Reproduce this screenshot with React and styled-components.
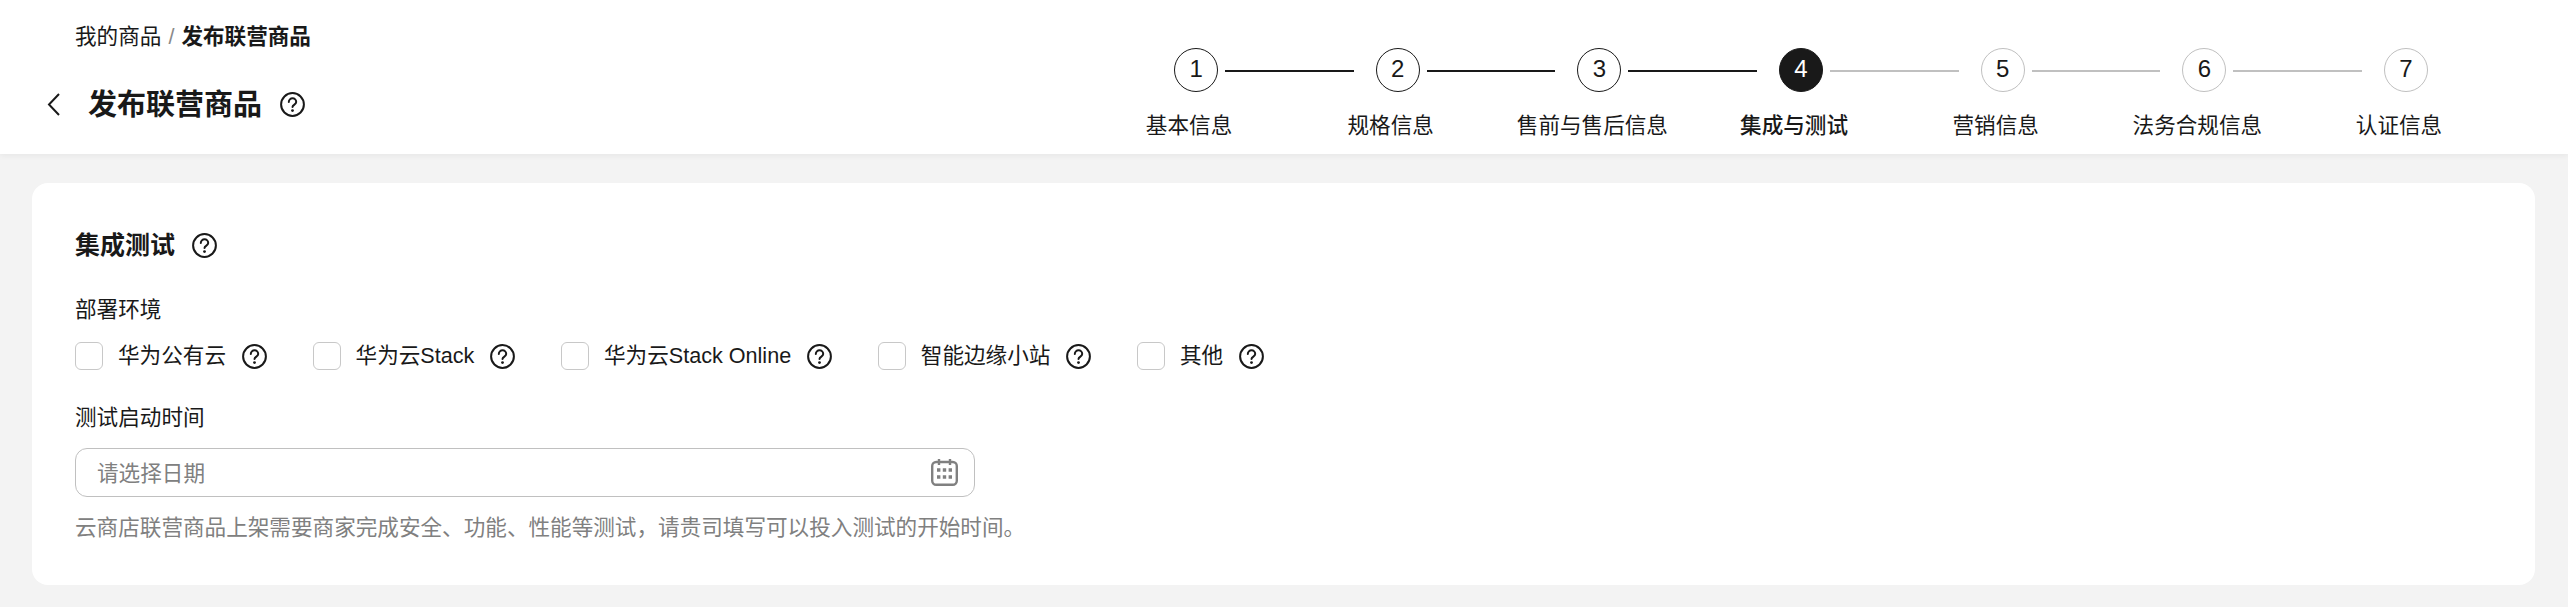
import React from 'react'
import styled, { createGlobalStyle } from 'styled-components'

const STEPS = ['基本信息', '规格信息', '售前与售后信息', '集成与测试', '营销信息', '法务合规信息', '认证信息']
const CURRENT = 3

const ENVIRONMENTS = ['华为公有云', '华为云Stack', '华为云Stack Online', '智能边缘小站', '其他']

function HelpIcon () {
  return (
    <HelpSvg width="25" height="25" viewBox="0 0 25 25" fill="none" stroke="#191919" strokeWidth="2">
      <circle cx="12.5" cy="12.5" r="11.4" />
      <path d="M8.8 10a3.7 3.7 0 0 1 7.4.1c0 2.5-3.7 2.4-3.7 5" strokeLinecap="round" />
      <circle cx="12.5" cy="18.6" r="1.4" fill="#191919" stroke="none" />
    </HelpSvg>
  )
}

function CalendarIcon () {
  return (
    <svg width="27" height="27" viewBox="0 0 27 27" fill="none" stroke="#808080" strokeWidth="2.4">
      <rect x="1.2" y="3" width="24.6" height="22.8" rx="4" />
      <path d="M8 0v6M19 0v6" />
      <path d="M6 11h3.4M11.8 11h3.4M17.6 11h3.4M6 18h3.4M11.8 18h3.4M17.6 18h3.4" strokeWidth="3.4" />
    </svg>
  )
}

export default function App () {
  return (
    <>
      <GlobalStyle />
      <Header>
        <TitleBlock>
          <Breadcrumb>
            我的商品<Slash>/</Slash><strong>发布联营商品</strong>
          </Breadcrumb>
          <TitleRow>
            <svg width="13" height="23" viewBox="0 0 13 23" fill="none" stroke="#191919" strokeWidth="2">
              <path d="M12 1 2 11.5 12 22" />
            </svg>
            <PageTitle>发布联营商品</PageTitle>
            <HelpIcon />
          </TitleRow>
        </TitleBlock>
        <Steps>
          {STEPS.map((label, i) => (
            <Step key={label} $last={i === STEPS.length - 1}>
              <StepHead>
                <Circle $active={i === CURRENT} $done={i <= CURRENT}>{i + 1}</Circle>
                {i < STEPS.length - 1 && <Line $done={i < CURRENT} />}
              </StepHead>
              <StepLabel $active={i === CURRENT}>{label}</StepLabel>
            </Step>
          ))}
        </Steps>
      </Header>
      <Main>
        <Card>
          <SectionTitle>集成测试<HelpIcon /></SectionTitle>
          <FieldLabel>部署环境</FieldLabel>
          <CheckRow>
            {ENVIRONMENTS.map((name) => (
              <CheckItem key={name}>
                <Box />
                <span>{name}</span>
                <HelpIcon />
              </CheckItem>
            ))}
          </CheckRow>
          <FieldLabel $gap="33px">测试启动时间</FieldLabel>
          <DateInput>
            <Placeholder>请选择日期</Placeholder>
            <CalendarIcon />
          </DateInput>
          <Hint>云商店联营商品上架需要商家完成安全、功能、性能等测试，请贵司填写可以投入测试的开始时间。</Hint>
        </Card>
      </Main>
    </>
  )
}

const GlobalStyle = createGlobalStyle`
  body {
    margin: 0;
    background: #f3f3f3;
    color: #191919;
    font-family: 'Liberation Sans', 'Noto Sans CJK SC', sans-serif;
    font-size: 21.6px;
    line-height: 30px;
  }
`

const Header = styled.header`
  display: flex;
  justify-content: space-between;
  height: 154px;
  padding-right: 140px;
  background: #fff;
  box-shadow: 0 2px 6px rgba(0, 0, 0, 0.05);
`

const TitleBlock = styled.div`
  padding: 22px 0 0 47px;
`

const Breadcrumb = styled.div`
  margin-left: 28px;

  strong {
    font-weight: 700;
  }
`

const Slash = styled.span`
  margin: 0 7px;
  color: #8a8a8a;
`

const TitleRow = styled.div`
  display: flex;
  align-items: center;
  margin-top: 30px;
`

const PageTitle = styled.h1`
  margin: 2px 18px 0 28px;
  font-size: 29px;
  line-height: 42px;
  font-weight: 700;
`

const HelpSvg = styled.svg`
  flex: none;
`

const Steps = styled.ol`
  display: flex;
  margin: 0;
  padding: 48px 0 0;
  list-style: none;
`

const Step = styled.li`
  width: ${(p) => (p.$last ? '44px' : '201.67px')};
`

const StepHead = styled.div`
  display: flex;
  align-items: center;
  height: 44px;
`

const Circle = styled.span`
  flex: none;
  display: flex;
  align-items: center;
  justify-content: center;
  box-sizing: border-box;
  width: 44px;
  height: 44px;
  border-radius: 50%;
  border: 1px solid ${(p) => (p.$done ? '#191919' : '#c0c0c0')};
  background: ${(p) => (p.$active ? '#191919' : '#fff')};
  color: ${(p) => (p.$active ? '#fff' : '#191919')};
  font-size: 24px;
  padding-bottom: 3px;
`

const Line = styled.span`
  flex: 1;
  height: 2px;
  margin: 2px 22px 0 7px;
  background: ${(p) => (p.$done ? '#191919' : '#c0c0c0')};
`

const StepLabel = styled.div`
  width: 200px;
  margin: 19px 0 0 -85px;
  text-align: center;
  white-space: nowrap;
  font-weight: ${(p) => (p.$active ? 500 : 400)};
`

const Main = styled.main`
  padding: 29px 33px 22px 32px;
`

const Card = styled.section`
  padding: 44px 43px 42px;
  background: #fff;
  border-radius: 16px;
`

const SectionTitle = styled.h2`
  display: flex;
  align-items: center;
  gap: 17px;
  margin: 0;
  font-size: 25px;
  line-height: 36px;
  font-weight: 700;
`

const FieldLabel = styled.div`
  margin-top: ${(p) => p.$gap || '32px'};
`

const CheckRow = styled.div`
  display: flex;
  gap: 45.6px;
  margin-top: 17px;
  height: 28px;
`

const CheckItem = styled.label`
  display: flex;
  align-items: center;
  white-space: nowrap;

  span {
    margin: 0 16px 0 15px;
  }
`

const Box = styled.i`
  box-sizing: border-box;
  width: 28px;
  height: 28px;
  border: 1px solid #c8c8c8;
  border-radius: 6px;
  background: #fff;
`

const DateInput = styled.div`
  box-sizing: border-box;
  display: flex;
  align-items: center;
  justify-content: space-between;
  width: 900px;
  height: 49px;
  margin-top: 15px;
  padding: 0 16px 0 21px;
  border: 1px solid #c0c0c0;
  border-radius: 12px;
`

const Placeholder = styled.span`
  color: #808080;
  padding-top: 2px;
`

const Hint = styled.p`
  margin: 16px 0 0;
  color: #808080;
`
